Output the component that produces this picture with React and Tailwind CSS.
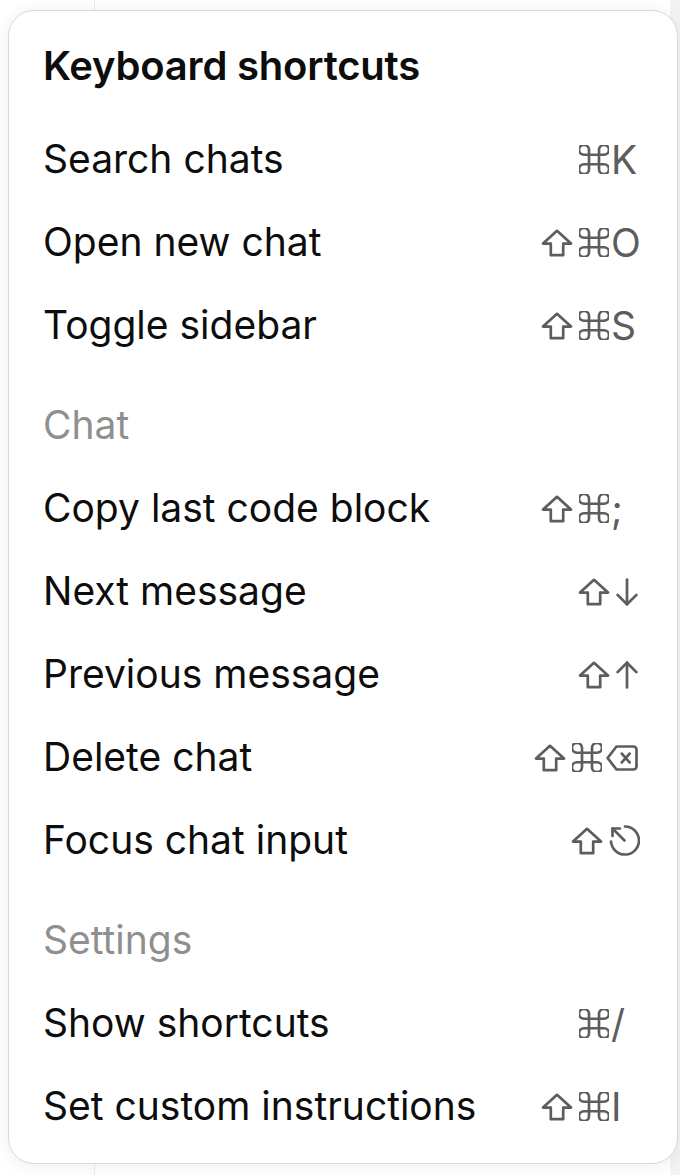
import React from "react";

const stroke = "#5d5d5d";

function ShiftIcon() {
  return (
    <svg width="32" height="28" viewBox="0 0 32 28" fill="none" stroke={stroke} strokeWidth="2.7" strokeLinejoin="round" strokeLinecap="round">
      <path d="M16 1.8 L30 14.6 H22.2 V26.2 H9.8 V14.6 H2 Z" />
    </svg>
  );
}

function CmdIcon() {
  return (
    <svg width="30" height="29" viewBox="3 3 18 18" fill="none" stroke={stroke} strokeWidth="1.6" strokeLinejoin="round" strokeLinecap="round" preserveAspectRatio="none">
      <path d="M15 6v12a3 3 0 1 0 3-3H6a3 3 0 1 0 3 3V6a3 3 0 1 0-3 3h12a3 3 0 1 0-3-3" />
    </svg>
  );
}

function DownIcon() {
  return (
    <svg width="22" height="28" viewBox="0 0 22 28" fill="none" stroke={stroke} strokeWidth="2.7" strokeLinejoin="round" strokeLinecap="round">
      <path d="M11 1.5 V26.3" />
      <path d="M1.6 16.9 L11 26.3 L20.4 16.9" />
    </svg>
  );
}

function UpIcon() {
  return (
    <svg width="22" height="28" viewBox="0 0 22 28" fill="none" stroke={stroke} strokeWidth="2.7" strokeLinejoin="round" strokeLinecap="round">
      <path d="M11 26.5 V1.7" />
      <path d="M1.6 11.1 L11 1.7 L20.4 11.1" />
    </svg>
  );
}

function BackspaceIcon() {
  return (
    <svg width="32" height="26" viewBox="0 0 32 26" fill="none" stroke={stroke} strokeWidth="2.7" strokeLinejoin="round" strokeLinecap="round">
      <path d="M10.5 1.5 H27.5 A3 3 0 0 1 30.5 4.5 V21.5 A3 3 0 0 1 27.5 24.5 H10.5 L1.6 13 Z" />
      <path d="M15.8 8.6 L23.6 17.4 M23.6 8.6 L15.8 17.4" />
    </svg>
  );
}

function FocusIcon() {
  return (
    <svg width="31" height="31" viewBox="0 0 31 31" fill="none" stroke={stroke} strokeWidth="2.7" strokeLinejoin="round" strokeLinecap="round">
      <path d="M16 1.5 A14 14 0 1 1 2 16.5" />
      <path d="M3.5 3.5 L15.5 15.5" />
      <path d="M3.5 11 V3.5 H11" />
    </svg>
  );
}

function Letter({ children }) {
  return (
    <span className="block text-[39px] leading-none text-[#5d5d5d] -ml-[1px]">{children}</span>
  );
}

function Key({ k, row }) {
  switch (k) {
    case "shift":
      return (
        <span className="flex w-[38px] shrink-0 items-center">
          <ShiftIcon />
        </span>
      );
    case "cmd":
      return (
        <span className={`flex ${row === "del" ? "w-[34px]" : "w-[33px]"} shrink-0 items-center`}>
          <CmdIcon />
        </span>
      );
    case "down":
      return (
        <span className="flex w-[29px] shrink-0 items-center">
          <DownIcon />
        </span>
      );
    case "up":
      return (
        <span className="flex w-[29px] shrink-0 items-center">
          <UpIcon />
        </span>
      );
    case "back":
      return (
        <span className="flex w-[39px] shrink-0 items-center">
          <BackspaceIcon />
        </span>
      );
    case "focus":
      return (
        <span className="flex w-[36px] shrink-0 items-center">
          <FocusIcon />
        </span>
      );
    default:
      return (
        <span className="flex w-[33px] shrink-0 items-center">
          <Letter>{k}</Letter>
        </span>
      );
  }
}

const sections = [
  {
    title: null,
    items: [
      { label: "Search chats", keys: ["cmd", "K"] },
      { label: "Open new chat", keys: ["shift", "cmd", "O"] },
      { label: "Toggle sidebar", keys: ["shift", "cmd", "S"] },
    ],
  },
  {
    title: "Chat",
    items: [
      { label: "Copy last code block", keys: ["shift", "cmd", ";"] },
      { label: "Next message", keys: ["shift", "down"] },
      { label: "Previous message", keys: ["shift", "up"] },
      { label: "Delete chat", keys: ["shift", "cmd", "back"], row: "del" },
      { label: "Focus chat input", keys: ["shift", "focus"] },
    ],
  },
  {
    title: "Settings",
    items: [
      { label: "Show shortcuts", keys: ["cmd", "/"] },
      { label: "Set custom instructions", keys: ["shift", "cmd", "I"] },
    ],
  },
];

export default function App() {
  return (
    <div
      className="relative flex h-[1175px] w-[680px] overflow-hidden bg-white"
      style={{ fontFamily: "Inter, 'Noto Sans', sans-serif" }}
    >
      <div className="h-full w-[95px] border-r border-[#ececec] bg-white" />
      <div className="h-full flex-1 bg-white" />
      <div className="h-full w-[10px] bg-[#f3f3f3]" />

      <div className="absolute left-[8px] top-[10px] flex h-[1154px] w-[670px] flex-col rounded-[26px] border border-[#d9d9d9] bg-white pl-[34px] pr-[32px] pt-[13px] shadow-[0_2px_18px_rgba(0,0,0,0.07)]">
        <div className="flex h-[83px] items-center text-[40px] font-semibold text-[#0d0d0d] tracking-[-0.2px]">
          Keyboard shortcuts
        </div>
        <div className="mt-[11px] flex flex-col">
          {sections.map((s, si) => (
            <div key={si} className="flex flex-col">
              {s.title && (
                <div className="mt-[17px] flex h-[83px] items-center text-[39px] text-[#8f8f8f]">
                  {s.title}
                </div>
              )}
              {s.items.map((it) => (
                <div key={it.label} className="flex h-[83px] items-center justify-between">
                  <span className="text-[39px] text-[#0d0d0d]">{it.label}</span>
                  <span className="flex items-center">
                    {it.keys.map((k, i) => (
                      <Key key={i} k={k} row={it.row} />
                    ))}
                  </span>
                </div>
              ))}
            </div>
          ))}
        </div>
      </div>
    </div>
  );
}
